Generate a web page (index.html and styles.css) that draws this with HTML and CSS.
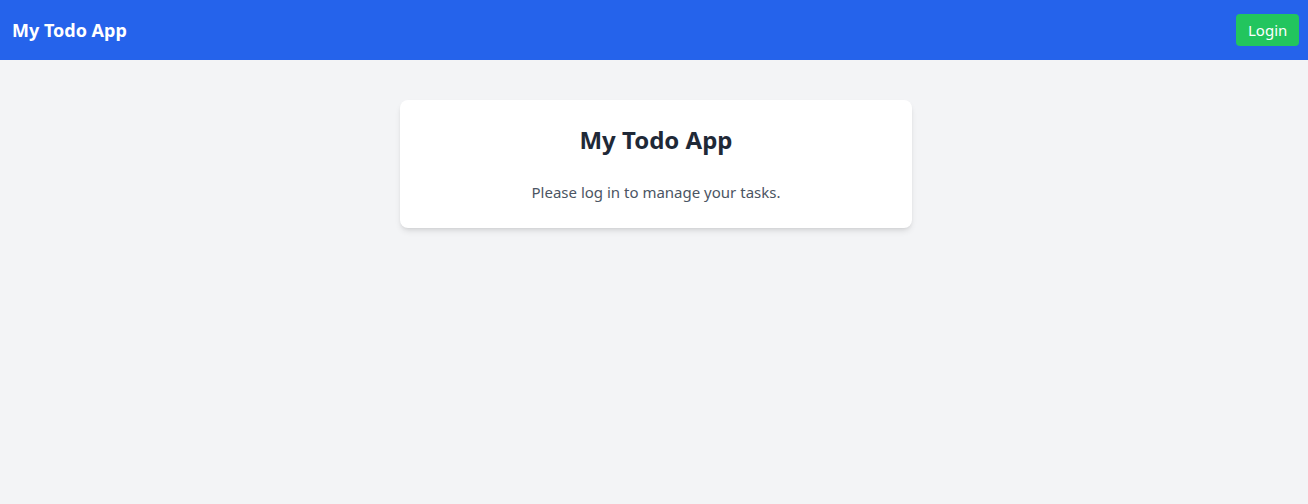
FILE: index.html
```html
<!DOCTYPE html>
<html lang="en">
<head>
<meta charset="utf-8">
<title>My Todo App</title>
<link rel="stylesheet" href="styles.css">
</head>
<body>
<header class="navbar">
  <span class="brand">My Todo App</span>
  <button class="login-btn">Login</button>
</header>
<main class="main">
  <section class="card">
    <h2 class="card-title">My Todo App</h2>
    <p class="card-text">Please log in to manage your tasks.</p>
  </section>
</main>
</body>
</html>
```
FILE: styles.css
```css
* { box-sizing: border-box; }
html, body { margin: 0; padding: 0; }
body {
  background: #f3f4f6;
  font-family: "Noto Sans", "Open Sans", sans-serif;
  min-height: 100vh;
}
.navbar {
  height: 60px;
  background: #2563eb;
  display: flex;
  align-items: center;
  justify-content: space-between;
  padding: 0 9px 0 12px;
}
.brand {
  color: #ffffff;
  font-weight: 700;
  font-size: 18px;
  line-height: 28px;
}
.login-btn {
  background: #22c55e;
  color: #ffffff;
  border: none;
  border-radius: 4px;
  font-family: inherit;
  font-size: 15px;
  line-height: 24px;
  padding: 4px 12px;
  height: 32px;
  width: 63px;
  cursor: pointer;
}
.main {
  display: flex;
  justify-content: center;
  padding: 40px 0 0 4px;
}
.card {
  width: 512px;
  background: #ffffff;
  border-radius: 8px;
  box-shadow: 0 4px 6px -1px rgba(0,0,0,0.1), 0 2px 4px -2px rgba(0,0,0,0.1);
  padding: 24px 24px 24px;
  text-align: center;
}
.card-title {
  margin: 0 0 24px;
  font-size: 24px;
  line-height: 32px;
  font-weight: 700;
  color: #1f2937;
}
.card-text {
  margin: 0;
  font-size: 15px;
  line-height: 24px;
  color: #4b5563;
}
```
